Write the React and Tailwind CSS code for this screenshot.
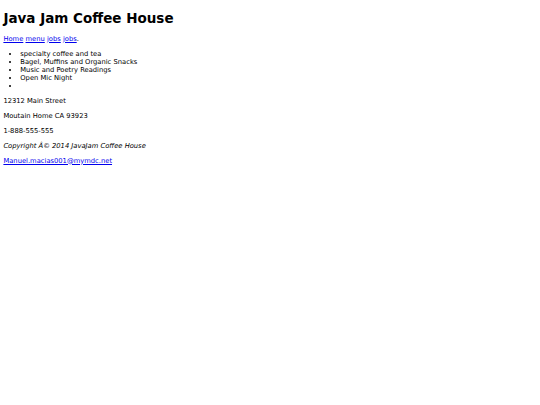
export default function App() {
  const items = ['specialty coffee and tea', 'Bagel, Muffins and Organic Snacks', 'Music and Poetry Readings', 'Open Mic Night', ''];

  return (
    <div className="bg-white min-h-[405px] px-[3.4px] pt-px text-black text-[6.75px] leading-[8px] font-['DejaVu_Sans',sans-serif]">
      <h1 className="mt-[9px] mb-[8.5px] text-[13.5px] font-bold leading-[normal]">Java Jam Coffee House</h1>
      <nav className="mb-[7px]">
        <a href="#" className="text-[#0000EE] underline">Home</a>{' '}
        <a href="#" className="text-[#0000EE] underline">menu</a>{' '}
        <a href="#" className="text-[#0000EE] underline">jobs</a>{' '}
        <a href="#" className="text-[#0000EE] underline">jobs</a>.
      </nav>
      <ul className="list-disc pl-[16.9px] my-[7px]">
        {items.map((t, i) => (
          <li key={i} className="min-h-[8px]">{t}</li>
        ))}
      </ul>
      <p className="my-[7px]">12312 Main Street</p>
      <p className="my-[7px]">Moutain Home CA 93923</p>
      <p className="my-[7px]">1-888-555-555</p>
      <p className="my-[7px] italic">Copyright Â© 2014 JavaJam Coffee House</p>
      <p className="my-[7px]">
        <a href="#" className="text-[#0000EE] underline">Manuel.macias001@mymdc.net</a>
      </p>
    </div>
  );
}
